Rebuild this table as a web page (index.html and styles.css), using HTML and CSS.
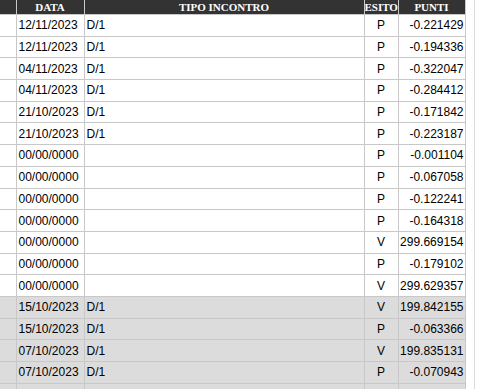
FILE: index.html
```html
<!DOCTYPE html>
<html lang="it">
<head>
<meta charset="utf-8">
<title>Incontri</title>
<link rel="stylesheet" href="styles.css">
</head>
<body>
<div class="wrap">
<table class="grid">
<colgroup>
<col class="c-x"><col class="c-data"><col class="c-tipo"><col class="c-esito"><col class="c-punti">
</colgroup>
<thead>
<tr><th></th><th>DATA</th><th>TIPO INCONTRO</th><th>ESITO</th><th>PUNTI</th></tr>
</thead>
<tbody>
<tr><td></td><td>12/11/2023</td><td>D/1</td><td class="esito">P</td><td class="num">-0.221429</td></tr>
<tr><td></td><td>12/11/2023</td><td>D/1</td><td class="esito">P</td><td class="num">-0.194336</td></tr>
<tr><td></td><td>04/11/2023</td><td>D/1</td><td class="esito">P</td><td class="num">-0.322047</td></tr>
<tr><td></td><td>04/11/2023</td><td>D/1</td><td class="esito">P</td><td class="num">-0.284412</td></tr>
<tr><td></td><td>21/10/2023</td><td>D/1</td><td class="esito">P</td><td class="num">-0.171842</td></tr>
<tr><td></td><td>21/10/2023</td><td>D/1</td><td class="esito">P</td><td class="num">-0.223187</td></tr>
<tr><td></td><td>00/00/0000</td><td></td><td class="esito">P</td><td class="num">-0.001104</td></tr>
<tr><td></td><td>00/00/0000</td><td></td><td class="esito">P</td><td class="num">-0.067058</td></tr>
<tr><td></td><td>00/00/0000</td><td></td><td class="esito">P</td><td class="num">-0.122241</td></tr>
<tr><td></td><td>00/00/0000</td><td></td><td class="esito">P</td><td class="num">-0.164318</td></tr>
<tr><td></td><td>00/00/0000</td><td></td><td class="esito">V</td><td class="num">299.669154</td></tr>
<tr><td></td><td>00/00/0000</td><td></td><td class="esito">P</td><td class="num">-0.179102</td></tr>
<tr><td></td><td>00/00/0000</td><td></td><td class="esito">V</td><td class="num">299.629357</td></tr>
<tr class="alt"><td></td><td>15/10/2023</td><td>D/1</td><td class="esito">V</td><td class="num">199.842155</td></tr>
<tr class="alt"><td></td><td>15/10/2023</td><td>D/1</td><td class="esito">P</td><td class="num">-0.063366</td></tr>
<tr class="alt"><td></td><td>07/10/2023</td><td>D/1</td><td class="esito">V</td><td class="num">199.835131</td></tr>
<tr class="alt"><td></td><td>07/10/2023</td><td>D/1</td><td class="esito">P</td><td class="num">-0.070943</td></tr>
<tr class="alt"><td></td><td></td><td></td><td class="esito"></td><td class="num"></td></tr>
</tbody>
</table>
</div>
</body>
</html>
```
FILE: styles.css
```css
html, body {
  margin: 0;
  padding: 0;
  background: #ffffff;
  overflow: hidden;
}
.wrap {
  width: 474px;
  height: 389px;
  border-right: 1px solid #dadada;
  overflow: hidden;
}
.grid {
  border-collapse: collapse;
  table-layout: fixed;
  width: 465px;
  font-family: "Liberation Sans", Arial, sans-serif;
  font-size: 12px;
  color: #000;
}
.c-x { width: 16px; }
.c-data { width: 68px; }
.c-tipo { width: 280px; }
.c-esito { width: 34px; }
.c-punti { width: 67px; }
.grid th {
  background: #333333;
  color: #ffffff;
  font-family: "Liberation Serif", "Times New Roman", serif;
  font-weight: bold;
  font-size: 11px;
  height: 14px;
  padding: 0;
  line-height: 13px;
  text-align: center;
  border: 1px solid #c8c8c8;
  border-top: none;
  white-space: nowrap;
  overflow: hidden;
}
.grid td {
  border: 1px solid #c8c8c8;
  padding: 0 1px 0 2px;
  height: 20.69px;
  white-space: nowrap;
  overflow: hidden;
}
.grid tr > :first-child {
  border-left: none;
}
.grid .esito {
  text-align: center;
  padding: 0;
}
.grid .num {
  text-align: right;
  padding: 0 1px 0 0;
}
.grid tr.alt td {
  background: #dcdcdc;
}
```
